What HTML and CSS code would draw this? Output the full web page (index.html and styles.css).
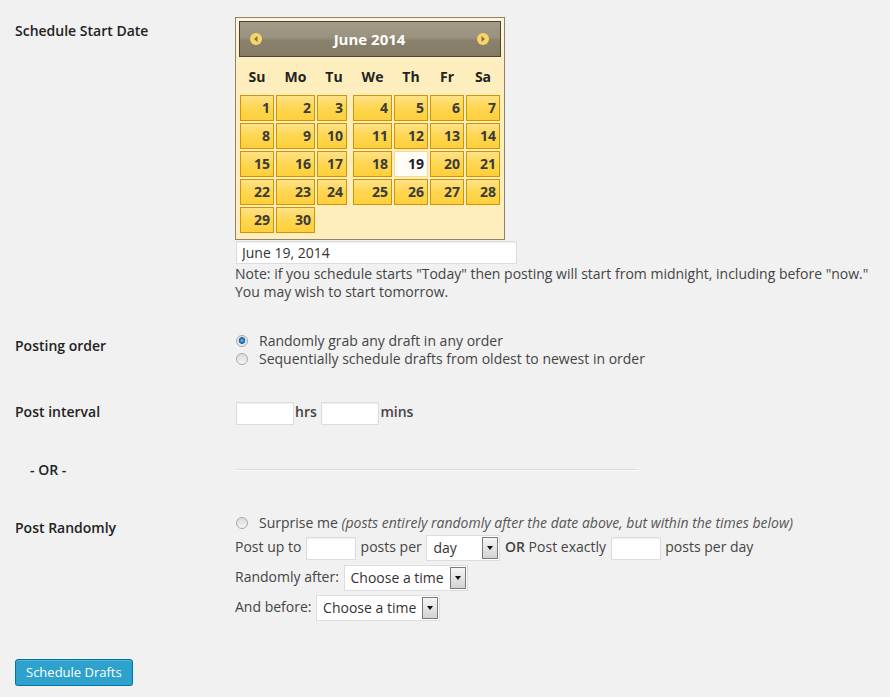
FILE: index.html
```html
<!DOCTYPE html>
<html lang="en">
<head>
    <meta charset="UTF-8">
    <title>Schedule Drafts</title>
    <link rel="stylesheet" href="styles.css">
</head>
<body>

    <div class="wrap">
        <table class="form-table">
            <tr>
                <th>Schedule Start Date</th>
                <td>
                    <!-- Inline datepicker -->
                    <div class="datepicker">
                        <div class="dp-header">
                            <span class="dp-nav">
                                <svg width="12" height="12" viewBox="0 0 12 12"><circle cx="6" cy="6" r="6" fill="#f9d466"/><path d="M7.5 3 L4 6 L7.5 9 Z" fill="#7d7159"/></svg>
                            </span>
                            <span class="dp-title">June 2014</span>
                            <span class="dp-nav">
                                <svg width="12" height="12" viewBox="0 0 12 12"><circle cx="6" cy="6" r="6" fill="#f9d466"/><path d="M4.5 3 L8 6 L4.5 9 Z" fill="#7d7159"/></svg>
                            </span>
                        </div>
                        <div class="dp-names">
                            <span>Su</span><span>Mo</span><span>Tu</span><span>We</span><span>Th</span><span>Fr</span><span>Sa</span>
                        </div>
                        <div class="dp-days">
                            <a href="#">1</a><a href="#">2</a><a href="#">3</a><a href="#">4</a><a href="#">5</a><a href="#">6</a><a href="#">7</a>
                            <a href="#">8</a><a href="#">9</a><a href="#">10</a><a href="#">11</a><a href="#">12</a><a href="#">13</a><a href="#">14</a>
                            <a href="#">15</a><a href="#">16</a><a href="#">17</a><a href="#">18</a><a href="#" class="today">19</a><a href="#">20</a><a href="#">21</a>
                            <a href="#">22</a><a href="#">23</a><a href="#">24</a><a href="#">25</a><a href="#">26</a><a href="#">27</a><a href="#">28</a>
                            <a href="#">29</a><a href="#">30</a>
                        </div>
                    </div>
                    <input type="text" class="text-input date-input" value="June 19, 2014">
                    <p class="note">Note: if you schedule starts "Today" then posting will start from midnight, including before "now."<br>You may wish to start tomorrow.</p>
                </td>
            </tr>
            <tr>
                <th>Posting order</th>
                <td>
                    <label class="option"><span class="radio checked"></span>Randomly grab any draft in any order</label>
                    <label class="option"><span class="radio"></span>Sequentially schedule drafts from oldest to newest in order</label>
                </td>
            </tr>
            <tr>
                <th>Post interval</th>
                <td>
                    <div class="interval">
                        <input type="text" class="text-input interval-input"><b>hrs</b> <input type="text" class="text-input interval-input"><b>mins</b>
                    </div>
                </td>
            </tr>
            <tr>
                <th class="or-label">- OR -</th>
                <td><div class="sep"></div></td>
            </tr>
            <tr>
                <th>Post Randomly</th>
                <td>
                    <label class="option"><span class="radio"></span>Surprise me&nbsp;<em>(posts entirely randomly after the date above, but within the times below)</em></label>
                    <div class="ctl-line">
                        Post up to <input type="text" class="text-input small-input"> posts per
                        <span class="select select-day"><span class="select-value">day</span><span class="select-arrow"></span></span>
                        <b>OR</b> Post exactly <input type="text" class="text-input small-input"> posts per day
                    </div>
                    <div class="ctl-line">
                        Randomly after: <span class="select select-time"><span class="select-value">Choose a time</span><span class="select-arrow"></span></span>
                    </div>
                    <div class="ctl-line">
                        And before: <span class="select select-time"><span class="select-value">Choose a time</span><span class="select-arrow"></span></span>
                    </div>
                </td>
            </tr>
        </table>

        <button class="button-primary">Schedule Drafts</button>
    </div>

</body>
</html>
```

FILE: styles.css
```css
* {
    box-sizing: border-box;
}

body {
    margin: 0;
    background-color: #f1f1f1;
    font-family: "Open Sans", sans-serif;
    font-size: 14px;
    color: #444;
}

.wrap {
    padding: 2px 0 0 15px;
}

/* Settings table */
.form-table {
    width: 100%;
    border-collapse: collapse;
    table-layout: fixed;
}

.form-table th {
    width: 210px;
    padding: 20px 10px 20px 0;
    text-align: left;
    vertical-align: top;
    font-weight: 600;
    color: #222;
    line-height: 18px;
}

.form-table th.or-label {
    padding-left: 15px;
}

.form-table td {
    padding: 15px 10px;
    vertical-align: top;
    line-height: 18px;
}

/* Datepicker */
.datepicker {
    width: 270px;
    padding: 3px 3px 6px;
    border: 1px solid #8e846b;
    background: linear-gradient(#fff6da, #feeebd 50px);
}

.dp-header {
    display: flex;
    align-items: center;
    height: 36px;
    padding: 0 11px 0 10px;
    border: 1px solid #494437;
    background: linear-gradient(#a39c8b, #9a927f 45%, #8a816c 55%, #857c67);
    color: #fff;
    font-size: 15px;
    font-weight: 700;
}

.dp-nav {
    display: flex;
    width: 12px;
    height: 12px;
}

.dp-title {
    flex: 1;
    text-align: center;
}

.dp-names,
.dp-days {
    display: grid;
    grid-template-columns: 34px 39px 34px 39px 34px 34px 34px;
    column-gap: 2px;
    margin: 0 1px;
}

.dp-names {
    height: 38px;
    padding-top: 2px;
    align-items: center;
    text-align: center;
    font-weight: 700;
    color: #222;
}

.dp-days {
    row-gap: 2px;
}

.dp-days a {
    height: 26px;
    padding-right: 3px;
    border: 1px solid #d19405;
    background: linear-gradient(#fee287, #fed650 50%, #fdcf3b);
    text-align: right;
    line-height: 24px;
    font-weight: 700;
    color: #3a3a3a;
    text-decoration: none;
}

.dp-days a:nth-child(7n+3) {
    width: 30px;
}

.dp-days a.today {
    border-color: #f3dc93;
    background: #fffdf6;
    color: #1e1e2e;
}

/* Inputs */
.text-input {
    height: 23px;
    margin: 1px;
    padding: 0 5px;
    border: 1px solid #ddd;
    background: #fff;
    box-shadow: inset 0 1px 2px rgba(0, 0, 0, 0.07);
    font-family: "Open Sans", sans-serif;
    font-size: 14px;
    color: #333;
    vertical-align: middle;
}

.date-input {
    display: block;
    width: 281px;
}

.interval-input {
    width: 58px;
}

.small-input {
    width: 50px;
}

.note {
    margin: 0 0 1px;
    color: #444;
}

/* Radio options */
.option {
    display: flex;
    align-items: center;
    height: 18px;
    white-space: nowrap;
}

.radio {
    width: 12px;
    height: 12px;
    margin: 0 11px 0 1px;
    border: 1px solid #a9a9a9;
    border-radius: 50%;
    background: linear-gradient(#dadada, #f7f7f7);
}

.radio.checked {
    background: radial-gradient(circle at 50% 45%, #9ad6ff 0, #2a86cf 1.5px, #1b5c99 3px, #e4e4e4 3.6px, #f6f6f6 100%);
}

.option em {
    color: #555;
}

.interval {
    height: 28px;
    padding-top: 1px;
    line-height: 25px;
}

.interval b,
.ctl-line b {
    font-weight: 600;
}

.sep {
    width: 402px;
    margin: 13px 0 0 1px;
    border-top: 1px solid #ddd;
    border-bottom: 1px solid #fafafa;
}

.ctl-line {
    height: 26px;
    margin-top: 4px;
    line-height: 26px;
    white-space: nowrap;
}

.option + .ctl-line {
    margin-top: 2px;
}

/* Fake select boxes */
.select {
    display: inline-flex;
    height: 26px;
    margin: 0 1px;
    padding: 1px;
    border: 1px solid #ddd;
    background: #fff;
    vertical-align: middle;
}

.select-day {
    width: 74px;
}

.select-time {
    width: 124px;
}

.select-value {
    flex: 1;
    padding-left: 5px;
    line-height: 22px;
    color: #333;
}

.select-arrow {
    display: flex;
    align-items: center;
    justify-content: center;
    width: 16px;
    border: 1px solid #7a7a7a;
    background: linear-gradient(#f5f5f5, #d2d2d2);
}

.select-arrow::before {
    content: "";
    border-left: 3px solid transparent;
    border-right: 3px solid transparent;
    border-top: 4px solid #111;
}

/* Submit button */
.button-primary {
    height: 27px;
    margin-top: 24px;
    padding: 0 10px;
    border: 1px solid #0074a2;
    border-radius: 3px;
    background-color: #2ea2cc;
    box-shadow: inset 0 1px 0 rgba(120, 200, 230, 0.5), 0 1px 0 rgba(0, 0, 0, 0.15);
    color: #fff;
    font-family: "Open Sans", sans-serif;
    font-size: 13px;
    line-height: 23px;
    cursor: pointer;
}
```
